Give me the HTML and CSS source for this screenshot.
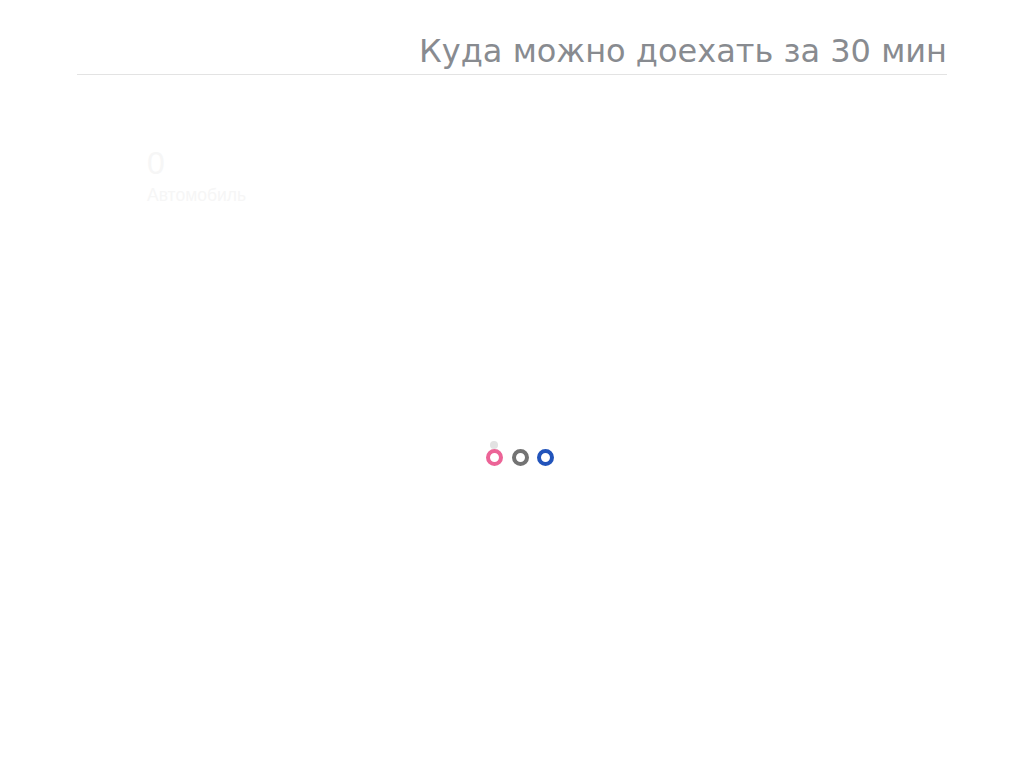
FILE: index.html
```html
<!DOCTYPE html>
<html lang="ru">
<head>
    <meta charset="UTF-8">
    <title>Куда можно доехать за 30 мин</title>
    <link rel="stylesheet" href="styles.css">
</head>
<body>
<div class="container">
    <h1 class="title">Куда можно доехать за 30 мин</h1>
    <div class="stat">
        <div class="stat-value">0</div>
        <div class="stat-label">Автомобиль</div>
    </div>
</div>

<div class="loader">
    <span class="dot"></span>
    <span class="ring pink"></span>
    <span class="ring gray"></span>
    <span class="ring blue"></span>
</div>
</body>
</html>
```

FILE: styles.css
```css
body {
    font-family: "DejaVu Sans", sans-serif;
    background: #fff;
    margin: 0;
    padding: 0;
}
.container {
    width: 870px;
    margin: 0 auto;
}
.title {
    margin: 0;
    padding-top: 32px;
    padding-bottom: 4px;
    text-align: right;
    font-size: 32px;
    font-weight: normal;
    line-height: 38px;
    color: #888b90;
    border-bottom: 1px solid #e3e3e3;
}
.stat {
    margin: 70px 0 0 70px;
    font-family: "Liberation Sans", Arial, sans-serif;
    color: #f6f6f6;
}
.stat-value {
    font-size: 32px;
    line-height: 36px;
}
.stat-label {
    margin-top: 4px;
    font-size: 17.5px;
    line-height: 20px;
}
.loader {
    position: absolute;
    left: 486px;
    top: 449px;
    display: flex;
    gap: 8.5px;
}
.ring {
    width: 9px;
    height: 9px;
    border: 4px solid;
    border-radius: 50%;
}
.pink { border-color: #ec6497; }
.gray { border-color: #737373; }
.blue { border-color: #2254bb; }
.dot {
    position: absolute;
    left: 4px;
    top: -8px;
    width: 8px;
    height: 8px;
    border-radius: 50%;
    background: #e2e2e2;
}
```
